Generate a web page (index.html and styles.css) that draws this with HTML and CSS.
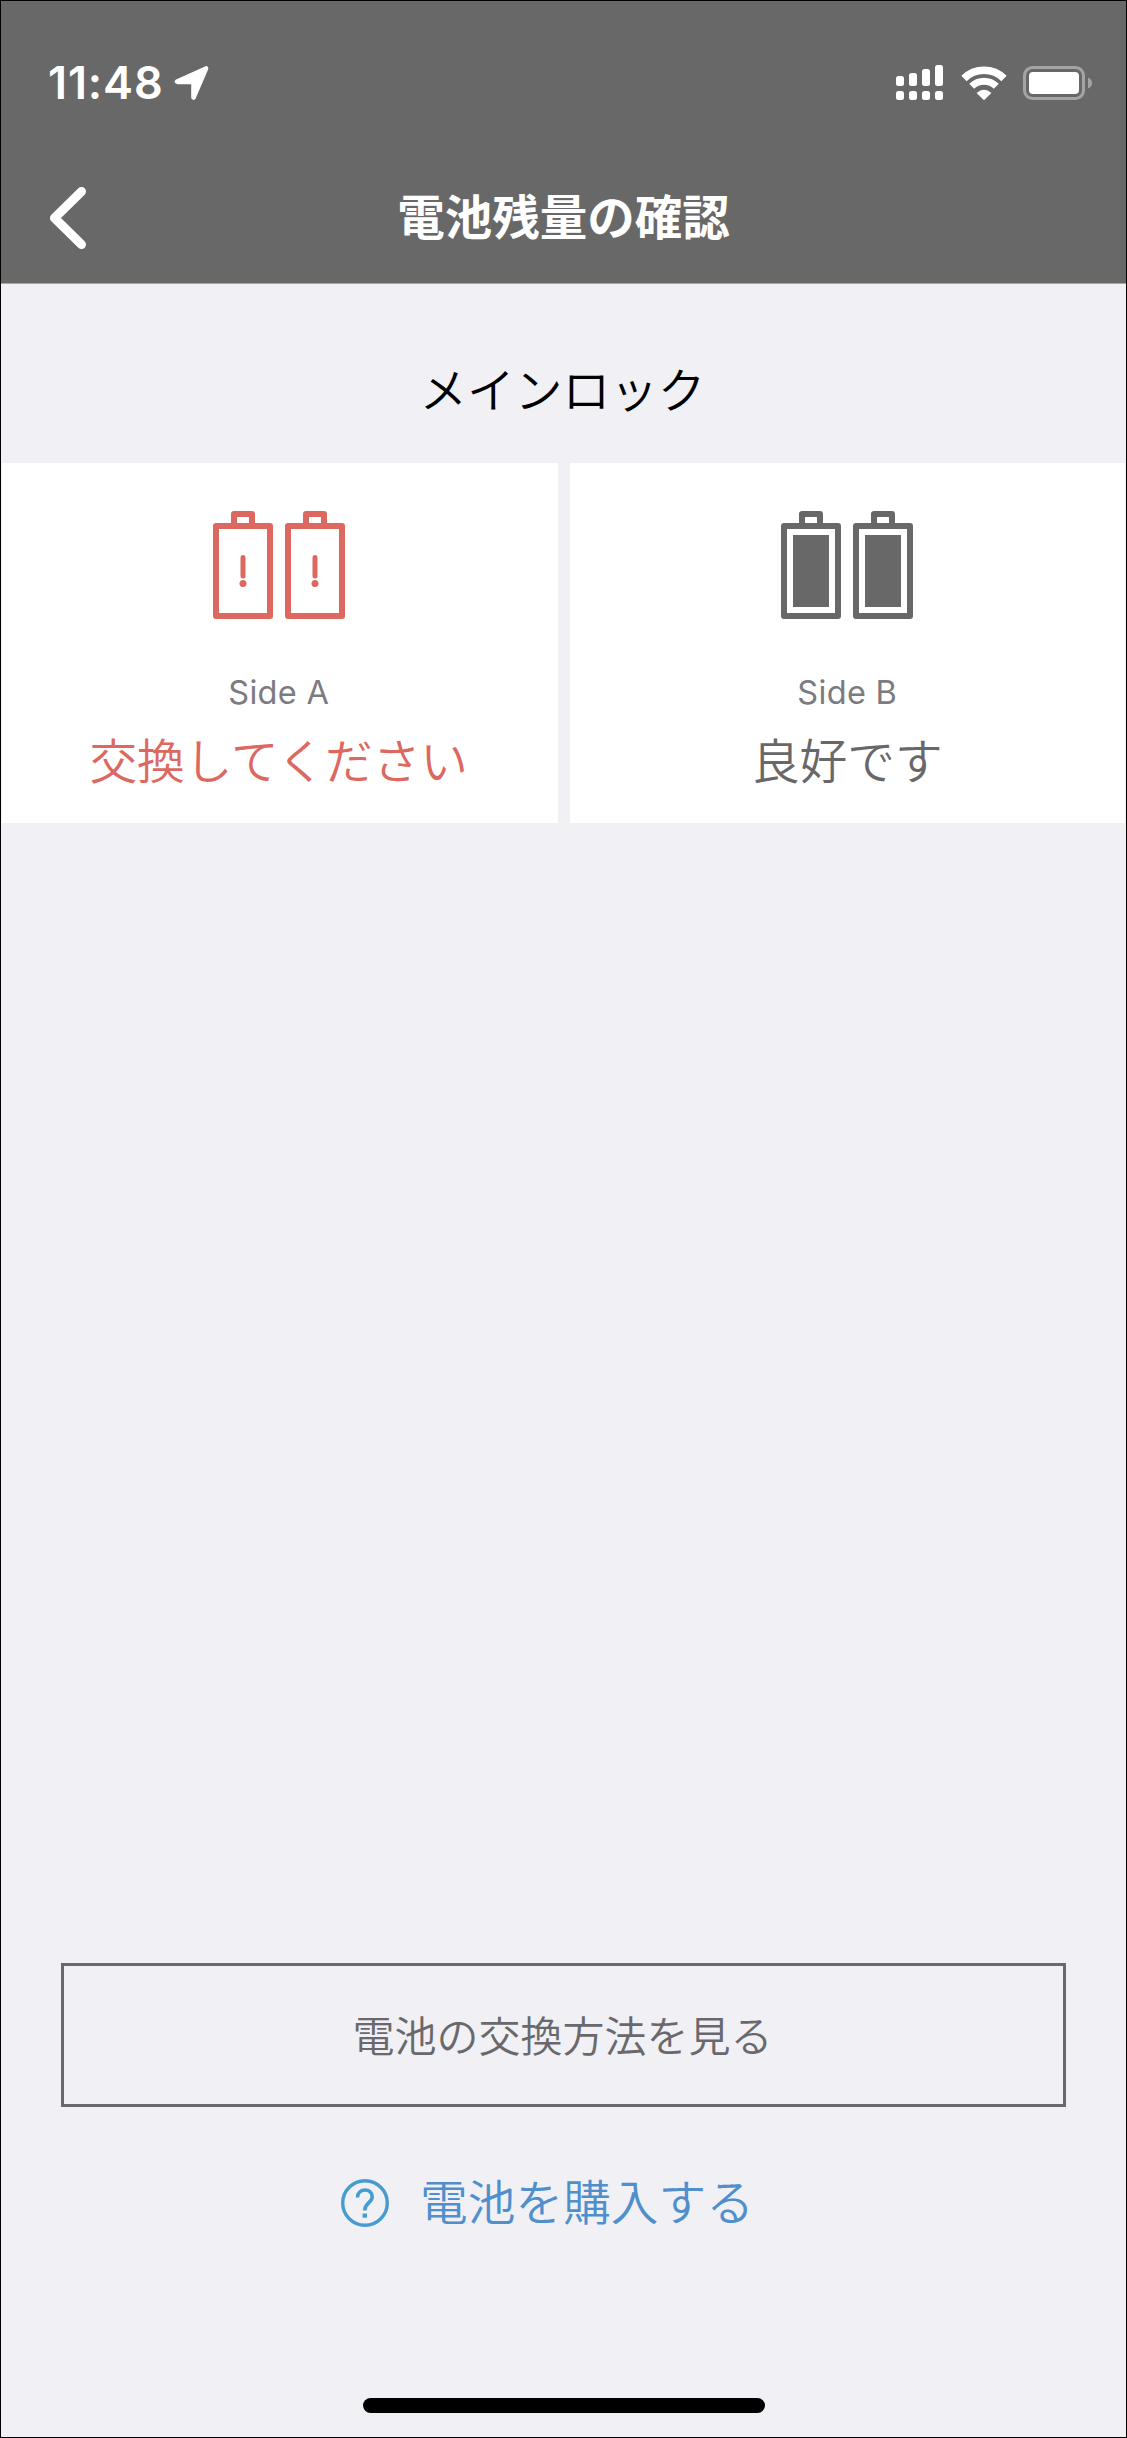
FILE: index.html
```html
<!DOCTYPE html>
<html lang="ja">

<head>
    <meta charset="UTF-8">
    <meta name="viewport" content="width=device-width, initial-scale=1">
    <title>電池残量の確認</title>
    <link rel="stylesheet" href="styles.css">
</head>

<body>
    <div class="screen">
        <header>
            <div class="status-bar">
                <span class="time">11:48</span>
                <svg class="location" width="36" height="36" viewBox="0 0 36 36">
                    <path d="M3 16.5 L32 3.5 L19.5 32.5 V17 H4 Z" fill="#fff" stroke="#fff" stroke-width="4.6" stroke-linejoin="round" />
                </svg>
                <div class="status-icons">
                    <svg width="47" height="36" viewBox="0 0 47 36" fill="#fff">
                        <rect x="0" y="11" width="8" height="10" rx="2.5" />
                        <rect x="13" y="8" width="8" height="13" rx="2.5" />
                        <rect x="26" y="4" width="8" height="17" rx="2.5" />
                        <rect x="39" y="0" width="8" height="21" rx="2.5" />
                        <rect x="0" y="26" width="8" height="9" rx="2.5" />
                        <rect x="13" y="26" width="8" height="9" rx="2.5" />
                        <rect x="26" y="26" width="8" height="9" rx="2.5" />
                        <rect x="39" y="26" width="8" height="9" rx="2.5" />
                    </svg>
                    <svg class="wifi" width="46" height="36" viewBox="0 0 46 36" fill="none" stroke="#fff">
                        <path d="M3 13.5 A28.5 28.5 0 0 1 43 13.5" stroke-width="7.6" />
                        <path d="M10.7 21.3 A17.5 17.5 0 0 1 35.3 21.3" stroke-width="7" />
                        <path d="M15.6 28 Q23 21.5 30.4 28 L23.8 34.6 Q23 35.2 22.2 34.6 Z" fill="#fff" stroke="none" />
                    </svg>
                    <svg class="battery" width="70" height="36" viewBox="0 0 70 36">
                        <rect x="1.5" y="2.5" width="59" height="31" rx="8" fill="none" stroke="#a4a4a4" stroke-width="3" />
                        <rect x="6" y="7" width="50" height="22" rx="4" fill="#fff" />
                        <path d="M65 12.5 Q69 14 69 18 Q69 22 65 23.5 Z" fill="#a4a4a4" />
                    </svg>
                </div>
            </div>
            <div class="nav-bar">
                <svg class="back" width="38" height="64" viewBox="0 0 38 64">
                    <path d="M32.5 5.5 L5.5 32 L32.5 58.5" fill="none" stroke="#fff" stroke-width="9" stroke-linecap="round" stroke-linejoin="round" />
                </svg>
                <h1>電池残量の確認</h1>
            </div>
        </header>

        <main>
            <h2>メインロック</h2>
            <div class="sides">
                <div class="side side-low">
                    <svg width="134" height="110" viewBox="0 0 134 110" fill="none" stroke="currentColor" stroke-width="6" stroke-linejoin="round">
                        <rect x="4" y="16" width="54" height="90" />
                        <path d="M22 15 V4 H40 V15" />
                        <path d="M31 47.5 L31 66" stroke-width="5" stroke-linecap="round" />
                        <circle cx="31" cy="73.5" r="3.5" fill="currentColor" stroke="none" />
                        <rect x="76" y="16" width="54" height="90" />
                        <path d="M94 15 V4 H112 V15" />
                        <path d="M103 47.5 L103 66" stroke-width="5" stroke-linecap="round" />
                        <circle cx="103" cy="73.5" r="3.5" fill="currentColor" stroke="none" />
                    </svg>
                    <p class="side-name">Side A</p>
                    <p class="side-status">交換してください</p>
                </div>
                <div class="side side-good">
                    <svg width="134" height="110" viewBox="0 0 134 110" fill="none" stroke="currentColor" stroke-width="6" stroke-linejoin="round">
                        <rect x="4" y="16" width="54" height="90" />
                        <path d="M22 15 V4 H40 V15" />
                        <rect x="13" y="25" width="36" height="72" fill="currentColor" stroke="none" />
                        <rect x="76" y="16" width="54" height="90" />
                        <path d="M94 15 V4 H112 V15" />
                        <rect x="85" y="25" width="36" height="72" fill="currentColor" stroke="none" />
                    </svg>
                    <p class="side-name">Side B</p>
                    <p class="side-status">良好です</p>
                </div>
            </div>
        </main>

        <footer>
            <button type="button" class="btn-guide">電池の交換方法を見る</button>
            <a class="buy-link">
                <svg width="48" height="48" viewBox="0 0 48 48" fill="none" stroke="#459dcf">
                    <circle cx="24" cy="24" r="22.3" stroke-width="3.4" />
                    <path d="M16.5 18.5 C16.8 8.5 31.2 8.8 31.2 17.7 C31.2 24 23.8 23.5 23.8 31.5" stroke-width="3.6" />
                    <rect x="21.6" y="34.5" width="4.4" height="4.2" fill="#459dcf" stroke="none" />
                </svg>
                <span>電池を購入する</span>
            </a>
            <div class="home-indicator"></div>
        </footer>
    </div>
</body>

</html>
```
FILE: styles.css
```css
* {
    box-sizing: border-box;
}

body {
    font-family: 'Inter', 'Noto Sans CJK JP', sans-serif;
    margin: 0;
    color: #000;
    background-color: #f1f0f5;
}

h1,
h2,
p {
    margin: 0;
}

svg {
    display: block;
    flex-shrink: 0;
}

.screen {
    display: flex;
    flex-direction: column;
    height: 2438px;
    border: 1px solid #000;
}

/* Header */
header {
    height: 283px;
    background-color: #686868;
    border-bottom: 1px solid #a5a5a8;
    color: #fff;
}

.status-bar {
    display: flex;
    align-items: center;
    height: 164px;
    padding: 0 33px 0 47px;
}

.time {
    font-size: 45px;
    font-weight: 600;
    line-height: 60px;
    letter-spacing: 0.9px;
}

.location {
    margin-left: 10px;
}

.status-icons {
    display: flex;
    margin-left: auto;
}

.wifi {
    margin-left: 18px;
}

.battery {
    margin-left: 16px;
}

.nav-bar {
    display: grid;
    grid-template-columns: 100px 1fr 100px;
    align-items: center;
    height: 106px;
}

.back {
    margin-left: 48px;
}

h1 {
    font-size: 47.5px;
    font-weight: 700;
    line-height: 70px;
    text-align: center;
}

/* Battery status */
main {
    flex: 1;
}

h2 {
    padding: 72px 2px 37px 0;
    font-size: 47.7px;
    font-weight: 350;
    line-height: 70px;
    text-align: center;
}

.sides {
    display: grid;
    grid-template-columns: 1fr 1fr;
    gap: 12px;
    padding: 0 1px;
}

.side {
    display: flex;
    flex-direction: column;
    align-items: center;
    height: 360px;
    padding-top: 47px;
    background-color: #fff;
}

.side-low {
    padding-right: 2px;
    color: #dc685f;
}

.side-good {
    color: #686868;
}

.side-name {
    margin-top: 53px;
    font-size: 32.5px;
    line-height: 40px;
    letter-spacing: 0.3px;
    color: #7b7b80;
}

.side-status {
    font-size: 47.7px;
    font-weight: 350;
    line-height: 70px;
    margin-top: 14px;
}

/* Bottom actions */
footer {
    display: flex;
    flex-direction: column;
    align-items: center;
    padding: 0 60px 24px;
}

.btn-guide {
    width: 100%;
    height: 144px;
    padding: 0 2px 4px 0;
    border: 3px solid #69696d;
    background: none;
    color: #69696d;
    font-family: inherit;
    font-size: 42px;
    font-weight: 350;
}

.buy-link {
    display: flex;
    align-items: center;
    gap: 31px;
    margin: 61px 32px 0 0;
    color: #508fcc;
    font-size: 47.7px;
    font-weight: 350;
    line-height: 70px;
}

.home-indicator {
    width: 402px;
    height: 15px;
    margin-top: 160px;
    border-radius: 8px;
    background-color: #000;
}
```
